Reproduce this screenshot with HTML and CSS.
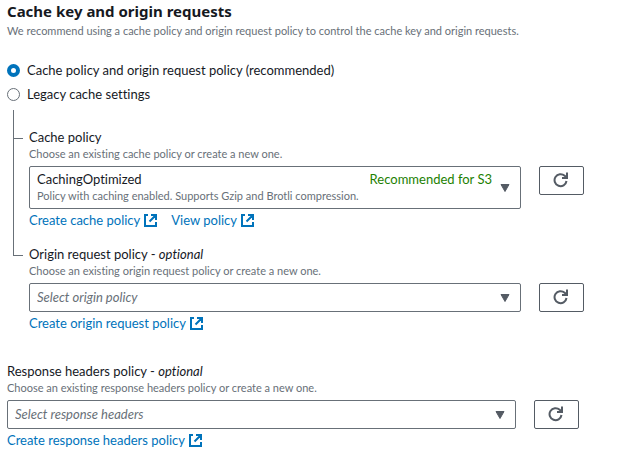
FILE: index.html
```html
<!DOCTYPE html>
<html lang="en">
<head>
<meta charset="utf-8">
<title>Cache key and origin requests</title>
<link rel="stylesheet" href="styles.css">
</head>
<body>
<svg class="sprite" aria-hidden="true">
  <symbol id="external" viewBox="0 0 14 14">
    <path d="M5 2H2v11h11V9M8 2h5v5M12.500 2.500L6.500 8.500" fill="none" stroke="currentColor" stroke-width="2"/>
  </symbol>
  <symbol id="refresh" viewBox="0 0 16 16">
    <path d="M13.500 9a6 6 0 1 1-1.800-5.200L13.500 5.500" fill="none" stroke="currentColor" stroke-width="2"/>
    <path d="M14 .5V6H9" fill="none" stroke="currentColor" stroke-width="2"/>
  </symbol>
  <symbol id="caret" viewBox="0 0 10 8">
    <path d="M1 .5h8L5 7.500z" fill="currentColor" stroke="currentColor" stroke-linejoin="round"/>
  </symbol>
</svg>
<main class="panel">
  <header>
    <h1 class="title">Cache key and origin requests</h1>
    <p class="hint">We recommend using a cache policy and origin request policy to control the cache key and origin requests.</p>
  </header>

  <div class="choices" role="radiogroup" aria-label="Cache settings">
    <label class="choice"><input type="radio" name="mode" checked>Cache policy and origin request policy (recommended)</label>
    <label class="choice"><input type="radio" name="mode">Legacy cache settings</label>
  </div>

  <div class="tree">
    <section class="field">
      <label class="label" for="cache">Cache policy</label>
      <p class="hint">Choose an existing cache policy or create a new one.</p>
      <div class="row">
        <div class="picker picker-rich">
          <select id="cache" aria-describedby="cache-tag cache-note"><option>CachingOptimized</option></select>
          <span class="tag" id="cache-tag">Recommended for S3</span>
          <span class="note hint" id="cache-note">Policy with caching enabled. Supports Gzip and Brotli compression.</span>
          <svg class="caret" aria-hidden="true"><use href="#caret"/></svg>
        </div>
        <button class="refresh" type="button" aria-label="Refresh cache policies"><svg><use href="#refresh"/></svg></button>
      </div>
      <nav class="links">
        <a href="#create-cache">Create cache policy<svg><use href="#external"/></svg></a>
        <a href="#view-cache">View policy<svg><use href="#external"/></svg></a>
      </nav>
    </section>

    <section class="field">
      <label class="label" for="origin">Origin request policy - <em>optional</em></label>
      <p class="hint">Choose an existing origin request policy or create a new one.</p>
      <div class="row">
        <div class="picker">
          <select id="origin" class="empty"><option>Select origin policy</option></select>
          <svg class="caret" aria-hidden="true"><use href="#caret"/></svg>
        </div>
        <button class="refresh" type="button" aria-label="Refresh origin policies"><svg><use href="#refresh"/></svg></button>
      </div>
      <nav class="links">
        <a href="#create-origin">Create origin request policy<svg><use href="#external"/></svg></a>
      </nav>
    </section>
  </div>

  <section class="field field-headers">
    <label class="label" for="headers">Response headers policy - <em>optional</em></label>
    <p class="hint">Choose an existing response headers policy or create a new one.</p>
    <div class="row">
      <div class="picker">
        <select id="headers" class="empty"><option>Select response headers</option></select>
        <svg class="caret" aria-hidden="true"><use href="#caret"/></svg>
      </div>
      <button class="refresh" type="button" aria-label="Refresh response headers policies"><svg><use href="#refresh"/></svg></button>
    </div>
    <nav class="links">
      <a href="#create-headers">Create response headers policy<svg><use href="#external"/></svg></a>
    </nav>
  </section>
</main>
</body>
</html>
```
FILE: styles.css
```css
* { box-sizing: border-box; }

body {
  margin: 0;
  background: #fff;
  color: #16191f;
  font: 13px/18px Lato, "Noto Sans", sans-serif;
  font-variant-ligatures: none;
}

.sprite { position: absolute; width: 0; height: 0; }

.panel { padding: 0 50px 0 7px; }

.title { margin: 0; font: 700 15px/22px "Noto Sans", sans-serif; }

.hint { margin: 0; color: #687078; font-size: 11px; line-height: 16px; }

header .hint { line-height: 18px; }

.choices {
  display: flex;
  flex-direction: column;
  align-items: flex-start;
  gap: 6px;
  padding-top: 21px;
}

.choice { display: flex; align-items: center; gap: 7px; }

.choice input {
  appearance: none;
  width: 13px;
  height: 13px;
  margin: 0;
  border: 1px solid #687078;
  border-radius: 50%;
  background: #fff;
}

.choice input:checked { border: 4px solid #0073bb; }

.tree {
  display: flex;
  flex-direction: column;
  gap: 16px;
  margin-top: 7px;
  padding: 18px 0 0 22px;
}

.tree .field { position: relative; }

/* Connector from the selected option to each nested field */
.tree .field::before {
  content: "";
  position: absolute;
  left: -16px;
  top: -18px;
  width: 9px;
  height: 28px;
  border: solid #687078;
  border-width: 0 0 1px 1px;
}

.tree .field + .field::before { top: -108px; height: 118px; }

.label { display: block; }

.row {
  display: flex;
  align-items: flex-start;
  gap: 18px;
  margin: 4px 0 2px;
}

.picker { position: relative; flex: 1; display: grid; }

.picker select {
  appearance: none;
  width: 100%;
  height: 29px;
  margin: 0;
  padding: 0 30px 2px 7px;
  border: 1px solid #687078;
  border-radius: 2px;
  background: #fff;
  color: inherit;
  font: inherit;
}

.picker .empty { color: #687078; font-style: italic; }

.picker-rich select { height: 43px; padding-bottom: 18px; }

.tag { position: absolute; top: 4px; right: 29px; color: #1d8102; pointer-events: none; }

.note { position: absolute; top: 22px; left: 8px; pointer-events: none; }

.caret {
  position: absolute;
  top: calc(50% - 4px);
  right: 11px;
  width: 10px;
  height: 8px;
  color: #545b64;
  pointer-events: none;
}

.refresh {
  display: flex;
  align-items: center;
  justify-content: center;
  width: 45px;
  height: 29px;
  padding: 0 1px 1px 0;
  border: 1px solid #545b64;
  border-radius: 2px;
  background: #fff;
  color: #545b64;
}

.refresh svg { width: 16px; height: 16px; }

.links { display: flex; gap: 14px; }

.links a {
  display: flex;
  align-items: center;
  gap: 3px;
  color: #0073bb;
  text-decoration: none;
}

.links svg { width: 14px; height: 14px; }

.field-headers { margin: 30px 5px 0 0; }
```
